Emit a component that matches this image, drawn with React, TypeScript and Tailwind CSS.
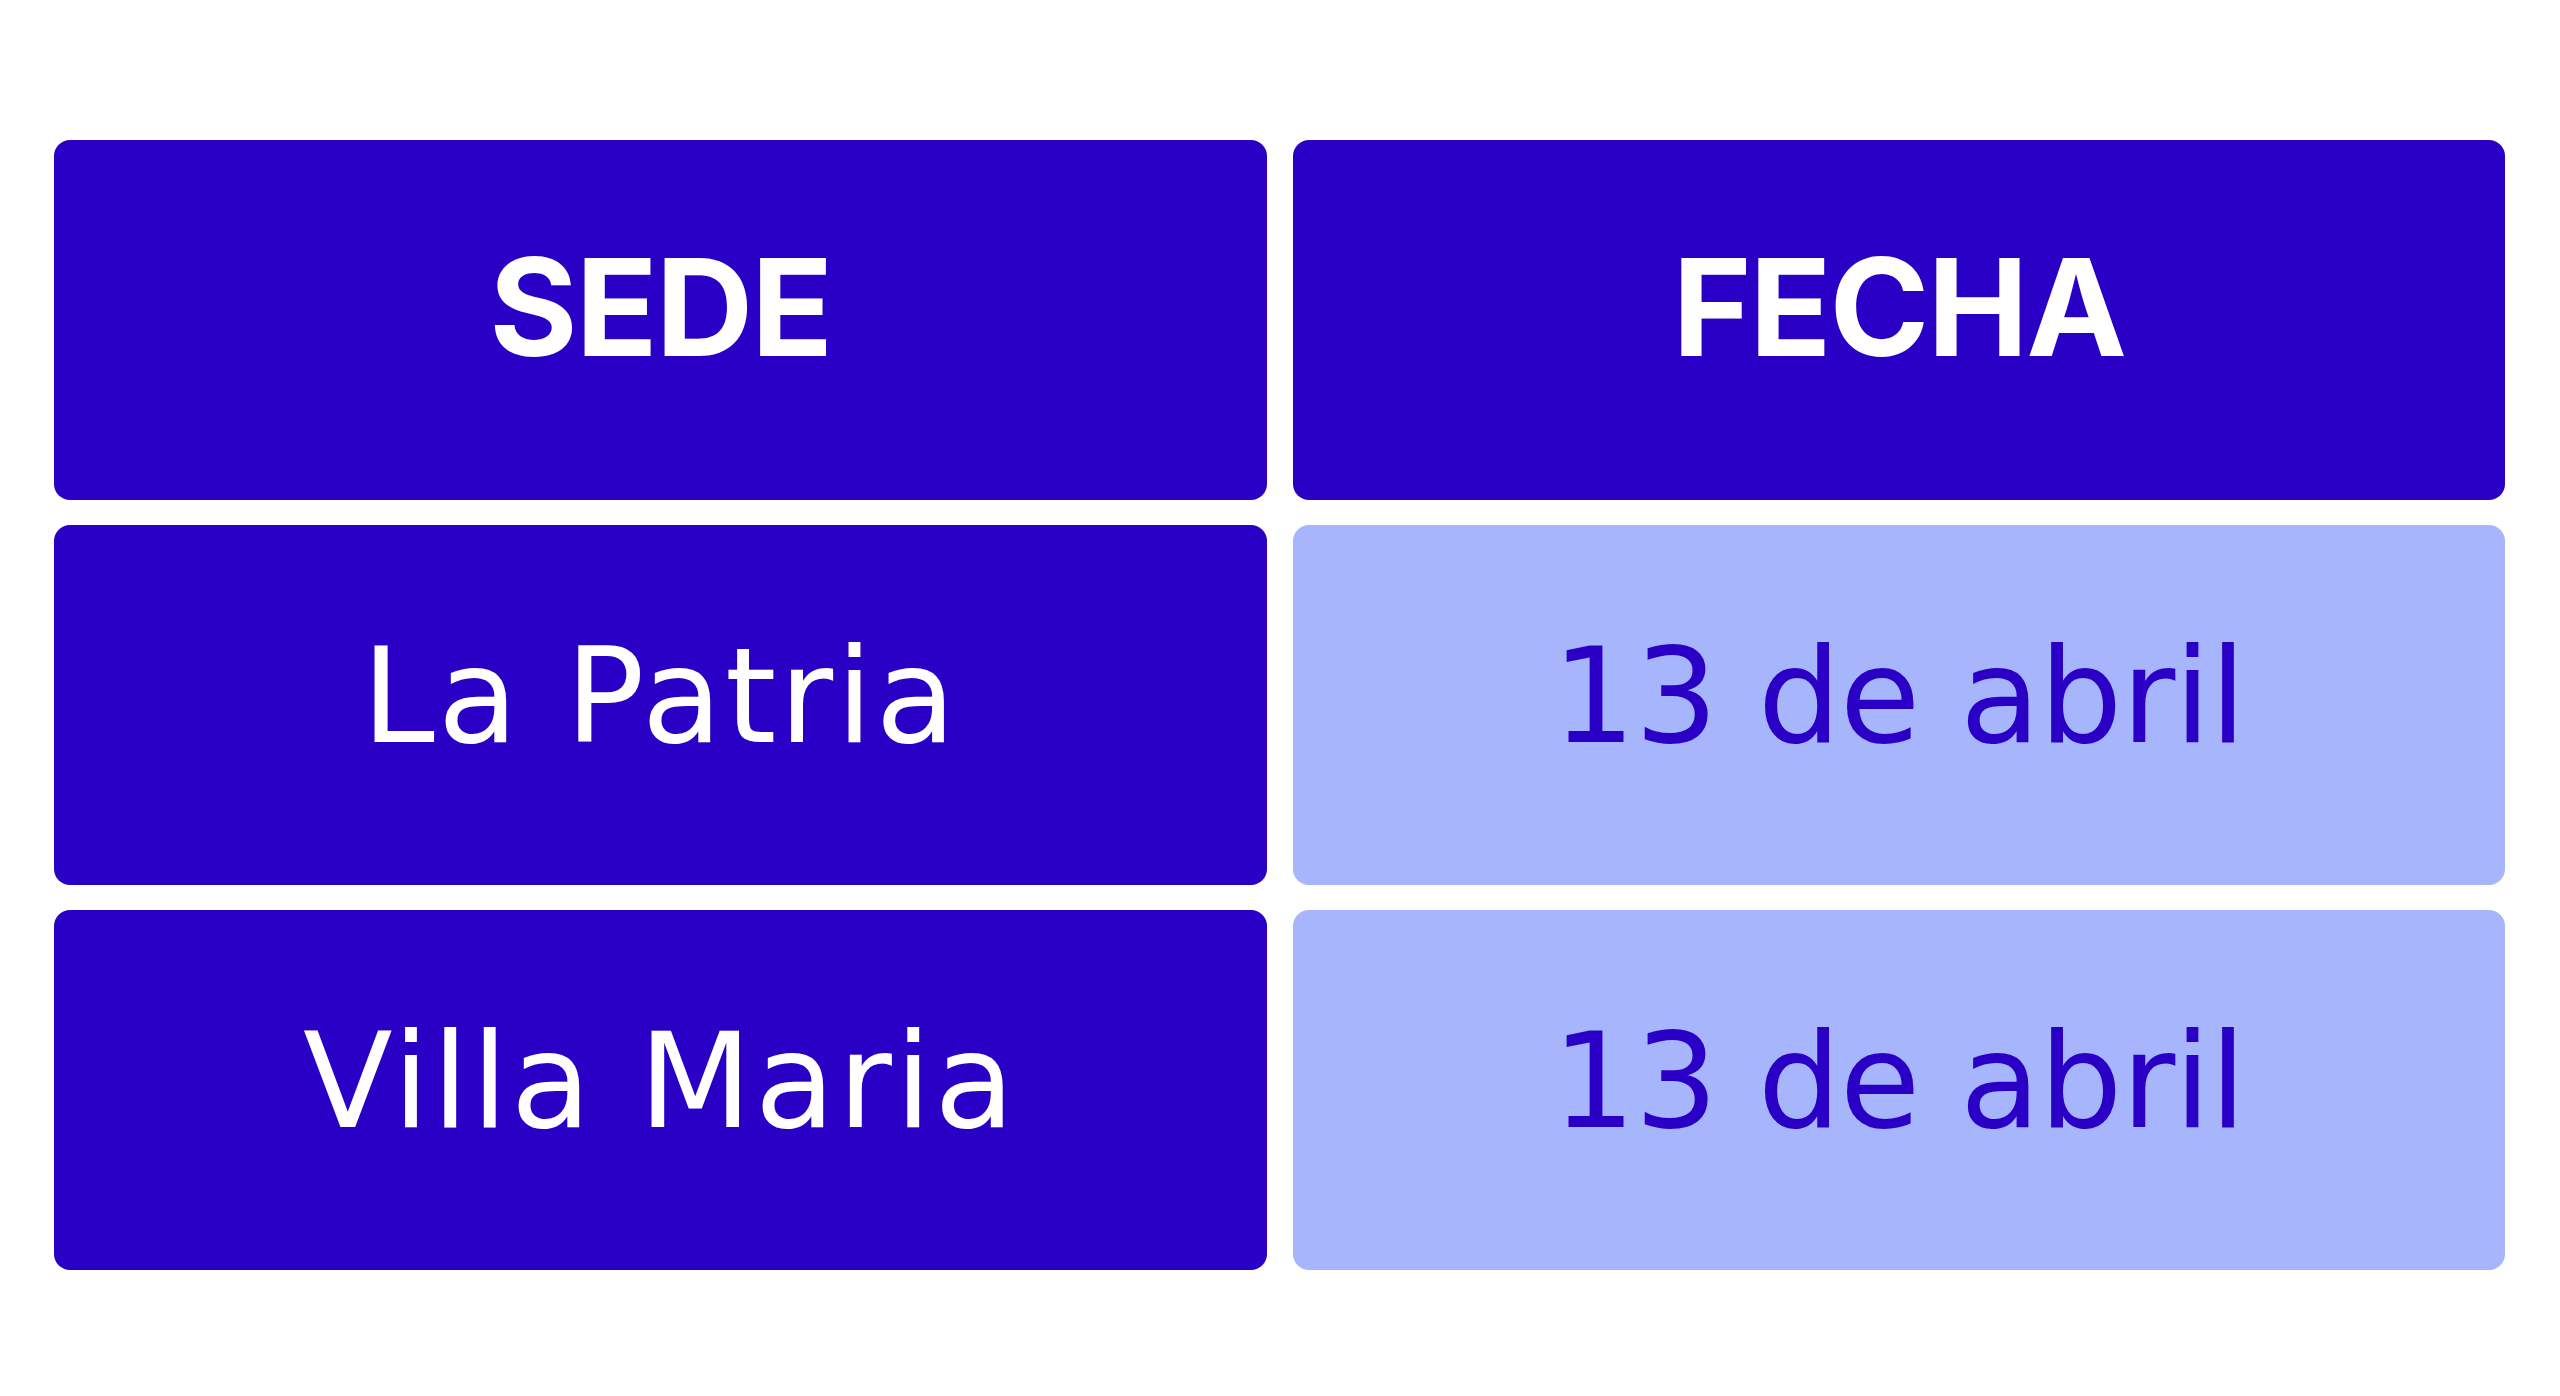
const rows = [
  { sede: "La Patria", fecha: "13 de abril" },
  { sede: "Villa Maria", fecha: "13 de abril" },
];

function Cell({ children, light }: { children: React.ReactNode; light?: boolean }) {
  return (
    <div
      className={`h-[360px] rounded-[16px] flex items-center justify-center ${
        light ? "bg-[#a7b5fd] text-[#2b00c6]" : "bg-[#2b00c6] text-white"
      }`}
    >
      {children}
    </div>
  );
}

export default function App() {
  return (
    <div className="w-[2560px] h-[1396px] bg-white pt-[140px] pl-[54px] pr-[55px]">
      <div className="grid grid-cols-2 gap-x-[26px] gap-y-[25px]">
        {/* header row */}
        <Cell>
          <span className="font-['Inter',sans-serif] font-bold text-[135px] leading-none tracking-[-2px] pb-[26px]">
            SEDE
          </span>
        </Cell>
        <Cell>
          <span className="font-['Inter',sans-serif] font-bold text-[135px] leading-none tracking-[-2px] pb-[26px]">
            FECHA
          </span>
        </Cell>
        {rows.map((row, index) => (
          <div key={index} className="contents">
            <Cell>
              <span className="font-['DejaVu_Sans',sans-serif] text-[131px] leading-none tracking-[3px] pb-[17px]">
                {row.sede}
              </span>
            </Cell>
            <Cell light>
              <span className="font-['DejaVu_Sans',sans-serif] text-[131px] leading-none tracking-[-1px] pb-[17px]">
                {row.fecha}
              </span>
            </Cell>
          </div>
        ))}
      </div>
    </div>
  );
}
